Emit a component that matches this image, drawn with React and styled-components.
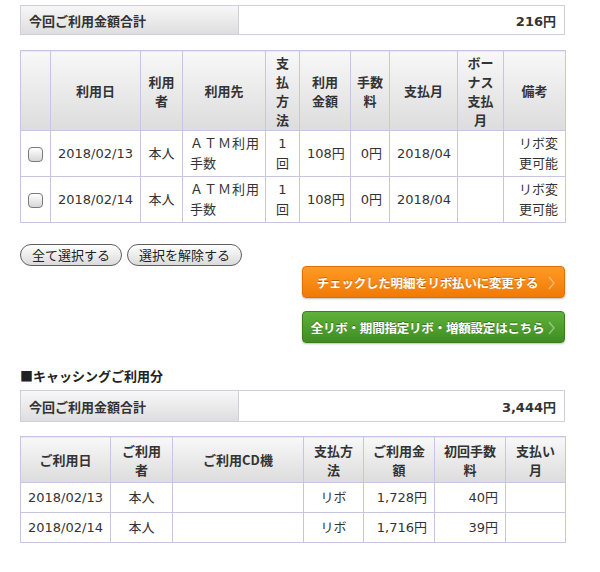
import React from 'react'
import styled, { createGlobalStyle } from 'styled-components'

const GlobalStyle = createGlobalStyle`
    html, body {
        margin:0;
        padding:0;
        background:#fff;
    }
    body {
        font-family:"DejaVu Sans", "Noto Sans CJK JP", sans-serif;
        font-size:13px;
        color:#333;
    }
`;

const Page = styled.div`
    width:545px;
    padding:5px 0 0 20px;
`;

const Summary = styled.div`
    display:grid;
    grid-template-columns:218px 1fr;
    height:${props => props.height || 30}px;
    border:1px solid #cfcfe0;
    box-sizing:border-box;
    margin-bottom:${props => props.gap || 15}px;
`;

const SummaryLabel = styled.div`
    display:flex;
    align-items:center;
    padding-left:8px;
    font-weight:700;
    font-family:"Noto Sans CJK JP", sans-serif;
    background:linear-gradient(#f7f7f7, #dedede);
    border-right:1px solid #cfcfe0;
`;

const SummaryValue = styled.div`
    display:flex;
    align-items:center;
    justify-content:flex-end;
    padding-right:8px;
    font-weight:700;
`;

const Table = styled.table`
    width:545px;
    table-layout:fixed;
    border-collapse:collapse;
    margin-bottom:${props => props.gap || 0}px;
`;

const HeadRow = styled.tr`
    height:${props => props.height}px;
`;

const Th = styled.th`
    border:1px solid #c6c6e2;
    background:linear-gradient(#f8f8f8, #dcdcdc);
    font-family:"Noto Sans CJK JP", sans-serif;
    font-weight:700;
    font-size:13px;
    line-height:19px;
    color:#333;
    padding:0 2px;
    text-align:center;
    vertical-align:middle;
`;

const Row = styled.tr`
    height:${props => props.height}px;
`;

const Td = styled.td`
    border:1px solid #c6c6e2;
    padding:1px 7px;
    line-height:20px;
    text-align:${props => props.align || 'center'};
    vertical-align:middle;
    white-space:nowrap;
    overflow:hidden;
`;

const Wide = styled.span`
    letter-spacing:1px;
`;

const Check = styled.span`
    display:inline-block;
    width:13px;
    height:13px;
    border:1px solid #7a7a7a;
    border-radius:4px;
    background:linear-gradient(#ffffff, #d6d6d6);
    vertical-align:middle;
`;

const PillRow = styled.div`
    display:flex;
    gap:5px;
`;

const Pill = styled.button`
    height:22px;
    padding:0 11px;
    border:1px solid #5f5f5f;
    border-radius:11px;
    background:linear-gradient(#ffffff, #dadada);
    font-family:"Noto Sans CJK JP", sans-serif;
    font-size:13px;
    color:#222;
    line-height:20px;
`;

const ActionStack = styled.div`
    display:flex;
    flex-direction:column;
    align-items:flex-end;
    gap:13px;
    margin-bottom:24px;
`;

const Action = styled.div`
    position:relative;
    width:263px;
    height:32px;
    box-sizing:border-box;
    border-radius:4px;
    display:flex;
    align-items:center;
    justify-content:center;
    padding-right:12px;
    background:${props => props.green
        ? 'linear-gradient(#5fb13a, #3f8d22)'
        : 'linear-gradient(#ff9a24, #f07a06)'};
    border:1px solid ${props => props.green ? '#3b7d1f' : '#e06f00'};
    box-shadow:0 1px 2px rgba(0,0,0,.25);
    color:#fff;
    font-family:"Noto Sans CJK JP", sans-serif;
    font-weight:700;
    font-size:12.5px;
    letter-spacing:-0.2px;
    text-shadow:0 -1px 0 rgba(0,0,0,.3);
    svg {
        position:absolute;
        right:9px;
        top:9px;
    }
`;

const Heading = styled.div`
    font-family:"Noto Sans CJK JP", sans-serif;
    font-weight:700;
    font-size:13px;
    color:#222;
    margin-bottom:5px;
    line-height:18px;
`;

const Chevron = () => (
    <svg width="7" height="14" viewBox="0 0 7 14">
        <path d="M1 1 L6 7 L1 13" fill="none" stroke="rgba(255,255,255,.4)" strokeWidth="1.4" />
    </svg>
)

const cardRows = [
    { date: '2018/02/13' },
    { date: '2018/02/14' },
]

const cashRows = [
    { date: '2018/02/13', amount: '1,728円', fee: '40円' },
    { date: '2018/02/14', amount: '1,716円', fee: '39円' },
]

export default function App(){
    return (
        <Page>
            <GlobalStyle />
            <Summary gap={15}>
                <SummaryLabel>今回ご利用金額合計</SummaryLabel>
                <SummaryValue>216円</SummaryValue>
            </Summary>

            <Table gap={21}>
                <colgroup>
                    <col style={{ width: 30 }} />
                    <col style={{ width: 90 }} />
                    <col style={{ width: 42 }} />
                    <col style={{ width: 83 }} />
                    <col style={{ width: 34 }} />
                    <col style={{ width: 51 }} />
                    <col style={{ width: 39 }} />
                    <col style={{ width: 68 }} />
                    <col style={{ width: 46 }} />
                    <col style={{ width: 62 }} />
                </colgroup>
                <thead>
                    <HeadRow height={80}>
                        <Th></Th>
                        <Th>利用日</Th>
                        <Th>利用<br />者</Th>
                        <Th>利用先</Th>
                        <Th>支<br />払<br />方<br />法</Th>
                        <Th>利用<br />金額</Th>
                        <Th>手数<br />料</Th>
                        <Th>支払月</Th>
                        <Th>ボー<br />ナス<br />支払<br />月</Th>
                        <Th>備考</Th>
                    </HeadRow>
                </thead>
                <tbody>
                    {cardRows.map(r => (
                        <Row height={46} key={r.date}>
                            <Td><Check /></Td>
                            <Td>{r.date}</Td>
                            <Td>本人</Td>
                            <Td align="left"><Wide>ＡＴＭ利用</Wide><br />手数</Td>
                            <Td style={{ padding: '1px 0' }}>1<br />回</Td>
                            <Td align="right">108円</Td>
                            <Td align="right">0円</Td>
                            <Td align="left">2018/04</Td>
                            <Td></Td>
                            <Td align="right">リボ変<br />更可能</Td>
                        </Row>
                    ))}
                </tbody>
            </Table>

            <PillRow>
                <Pill>全て選択する</Pill>
                <Pill>選択を解除する</Pill>
            </PillRow>

            <ActionStack>
                <Action>チェックした明細をリボ払いに変更する<Chevron /></Action>
                <Action green>全リボ・期間指定リボ・増額設定はこちら<Chevron /></Action>
            </ActionStack>

            <Heading>■キャッシングご利用分</Heading>
            <Summary height={32} gap={14}>
                <SummaryLabel>今回ご利用金額合計</SummaryLabel>
                <SummaryValue>3,444円</SummaryValue>
            </Summary>

            <Table>
                <colgroup>
                    <col style={{ width: 90 }} />
                    <col style={{ width: 62 }} />
                    <col style={{ width: 131 }} />
                    <col style={{ width: 60 }} />
                    <col style={{ width: 71 }} />
                    <col style={{ width: 71 }} />
                    <col style={{ width: 60 }} />
                </colgroup>
                <thead>
                    <HeadRow height={46}>
                        <Th>ご利用日</Th>
                        <Th>ご利用<br />者</Th>
                        <Th>ご利用CD機</Th>
                        <Th>支払方<br />法</Th>
                        <Th>ご利用金<br />額</Th>
                        <Th>初回手数<br />料</Th>
                        <Th>支払い<br />月</Th>
                    </HeadRow>
                </thead>
                <tbody>
                    {cashRows.map(r => (
                        <Row height={30} key={r.date}>
                            <Td>{r.date}</Td>
                            <Td>本人</Td>
                            <Td></Td>
                            <Td>リボ</Td>
                            <Td align="right">{r.amount}</Td>
                            <Td align="right">{r.fee}</Td>
                            <Td></Td>
                        </Row>
                    ))}
                </tbody>
            </Table>
        </Page>
    )
}
